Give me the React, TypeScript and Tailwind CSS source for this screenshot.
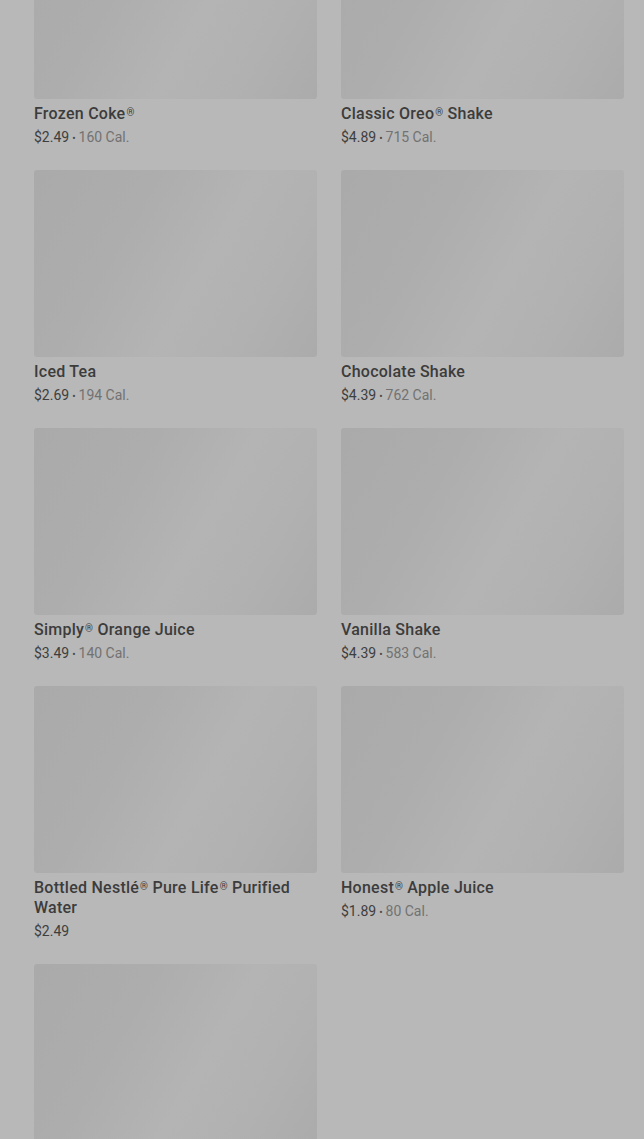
import React from "react";

interface IItem {
  name: string;
  price: string;
  cal?: string;
}

const items: IItem[] = [
  { name: "Frozen Coke®", price: "$2.49", cal: "160 Cal." },
  { name: "Classic Oreo® Shake", price: "$4.89", cal: "715 Cal." },
  { name: "Iced Tea", price: "$2.69", cal: "194 Cal." },
  { name: "Chocolate Shake", price: "$4.39", cal: "762 Cal." },
  { name: "Simply® Orange Juice", price: "$3.49", cal: "140 Cal." },
  { name: "Vanilla Shake", price: "$4.39", cal: "583 Cal." },
  { name: "Bottled Nestlé® Pure Life® Purified Water", price: "$2.49" },
  { name: "Honest® Apple Juice", price: "$1.89", cal: "80 Cal." },
  { name: "", price: "" },
];

// render ® a bit smaller and raised like the original font does
const withMarks = (text: string) =>
  text.split("®").map((part, i, arr) => (
    <React.Fragment key={i}>
      {part}
      {i < arr.length - 1 && (
        <span className="ml-[1px] align-top text-[10px] leading-[18px]">®</span>
      )}
    </React.Fragment>
  ));

const Card = ({ name, price, cal }: IItem) => {
  return (
    <div className="flex flex-col">
      <div className="h-[187px] w-full rounded-[3px] bg-[linear-gradient(120deg,#aaaaaa_0%,#adadad_32%,#b4b4b4_58%,#b1b1b1_78%,#ababab_100%)]" />
      {name && (
        <div className="mt-[5px] text-[16px] leading-[20px] font-medium tracking-[0.25px] text-[#3c3c3c]">
          {withMarks(name)}
        </div>
      )}
      {price && (
        <div className="mt-[3px] h-[20px] text-[14px] leading-[20px] text-[#3e3e3e]">
          {price}
          {cal && (
            <span className="text-[#727272]">
              <span className="mx-[3px] text-[10px] leading-[0] text-[#4a4a4a]">•</span>
              {cal}
            </span>
          )}
        </div>
      )}
    </div>
  );
};

export default function App() {
  return (
    <div
      className="h-[1139px] w-full overflow-hidden bg-[#b8b8b8]"
      style={{ fontFamily: "Roboto, 'Liberation Sans', sans-serif" }}
    >
      <div className="mt-[-88px] grid grid-cols-2 gap-x-6 gap-y-[23px] pl-[34px] pr-[20px]">
        {items.map((item, i) => (
          <Card key={i} {...item} />
        ))}
      </div>
    </div>
  );
}
